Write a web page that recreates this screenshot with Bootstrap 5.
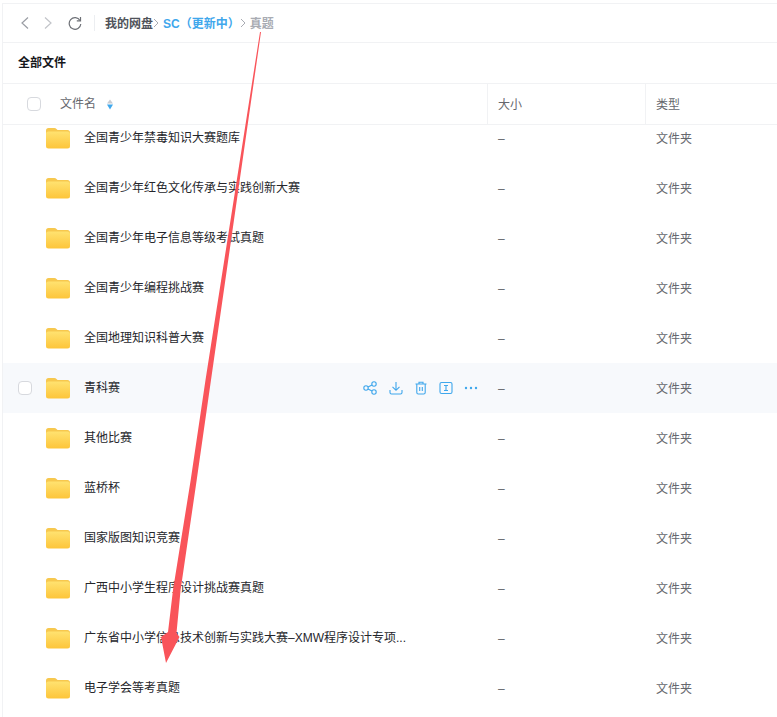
<!DOCTYPE html>
<html lang="zh">
<head>
<meta charset="utf-8">
<title>全部文件</title>
<link href="https://cdn.jsdelivr.net/npm/bootstrap@5.3.0/dist/css/bootstrap.min.css" rel="stylesheet">
<style>
html,body{height:100%;overflow:hidden;background:#fff}
body{font-family:"Liberation Sans","Noto Sans CJK SC",sans-serif;font-size:12px;color:#25262b;position:relative}
.shell{margin-left:2px;margin-top:3px;height:714px;display:flex;flex-direction:column;border-top:1px solid #f1f2f4;border-left:1px solid #f1f2f4}
.toolbar{height:39px;flex:none;border-bottom:1px solid #f1f2f4;padding-left:17px}
.tool-ic{display:block}
.tool-fwd{margin-left:13px}
.tool-reload{margin-left:15px}
.divider{width:1px;height:16px;background:#eceef1;margin:0 10px 0 12px}
.crumb{font-weight:600;color:#50535a;white-space:nowrap;padding-top:2px}
.crumb-link{color:#3fa7ec}
.crumb-now{color:#a9acb3}
.crumb-sep{color:#a9acb3;display:block}
.title-bar{height:41px;flex:none;border-bottom:1px solid #f1f2f4;padding-left:15px;font-weight:600;color:#17181c}
.head-row{height:41px;flex:none;border-bottom:1px solid #f1f2f4;color:#65676d}
.cell-name{width:484px;flex:none;display:flex;align-items:center}
.cell-size{width:158px;flex:none;padding-left:11px;padding-top:2px}
.cell-type{padding-left:11px;padding-top:2px;flex:1}
.head-row .cell-size,.head-row .cell-type{height:100%;display:flex;align-items:center;border-left:1px solid #f1f2f4;padding-left:10px}
.check{width:14px;height:14px;border:1px solid #d7d9de;border-radius:4px;background:#fff;flex:none;margin-left:24px}
.head-label{margin-left:19px}
.sort-ic{margin-left:10px;display:block}
.list-wrap{flex:1;overflow:hidden}
.file-list{margin-top:-12px}
.file-row{height:50px;display:flex;align-items:center;color:#65676d}
.file-row.active-row{background:#f7f9fc}
.name-box{padding-left:42px;display:flex;align-items:center;width:100%}
.active-row .name-box{padding-left:0}
.active-row .check{margin-left:15px;margin-right:13px}
.folder{display:block;flex:none;width:26px;height:22px}
.fname{margin-left:13px;color:#25262b;white-space:nowrap}
.actions{margin-left:auto;margin-right:9px;gap:11px}
.actions svg{display:block}
.action-share{margin-right:1px}
.arrow-layer{position:absolute;left:0;top:0;width:777px;height:717px;pointer-events:none}
</style>
</head>
<body>
<div class="shell">
  <div class="toolbar d-flex align-items-center">
    <svg class="tool-ic" width="10" height="14" viewBox="0 0 10 14" fill="none" stroke="#9a9da4" stroke-width="1.2"><path d="M8 1.500 2 7l6 5.500"/></svg>
    <svg class="tool-ic tool-fwd" width="10" height="14" viewBox="0 0 10 14" fill="none" stroke="#c2c4c9" stroke-width="1.2"><path d="M2 1.500 8 7l-6 5.500"/></svg>
    <svg class="tool-ic tool-reload" width="14" height="14" viewBox="0 0 14 14" fill="none" stroke="#6d7076" stroke-width="1.200"><path d="M12 4.500A5.800 5.800 0 1 0 12.800 8"/><path d="M12.500 1v3.800H8.800"/></svg>
    <span class="divider"></span>
    <span class="crumb">我的网盘</span>
    <svg class="crumb-sep" width="6" height="10" viewBox="0 0 6 10" fill="none" stroke="#a9acb3"><path d="M1 1l4 4-4 4"/></svg>
    <span class="crumb crumb-link ms-1">SC（更新中）</span>
    <svg class="crumb-sep" width="6" height="10" viewBox="0 0 6 10" fill="none" stroke="#a9acb3"><path d="M1 1l4 4-4 4"/></svg>
    <span class="crumb crumb-now ms-1">真题</span>
  </div>
  <div class="title-bar d-flex align-items-center">全部文件</div>
  <div class="head-row d-flex align-items-center">
    <div class="cell-name"><span class="check"></span><span class="head-label">文件名</span>
      <svg class="sort-ic" width="8" height="11" viewBox="0 0 8 11"><path d="M4 .5 7 4.500H1z" fill="#c9ccd2"/><path d="M4 10.500 7 5.500H1z" fill="#3fa7ec"/></svg>
    </div>
    <div class="cell-size">大小</div>
    <div class="cell-type">类型</div>
  </div>
  <div class="list-wrap">
    <svg width="0" height="0" class="d-block" aria-hidden="true">
      <defs>
        <linearGradient id="fg" x1="0" y1="0" x2="0" y2="1"><stop offset="0" stop-color="#ffe270"/><stop offset="1" stop-color="#fdc53a"/></linearGradient>
        <symbol id="folder-ic" viewBox="0 0 26 22">
          <path d="M1 3.500A2.500 2.500 0 0 1 3.500 1h5.800c1 0 1.600.4 2.200 1l1 1H22.500A2.500 2.500 0 0 1 25 5.500V8H1z" fill="#f7c84e"/>
          <rect x="1" y="4.500" width="24" height="17" rx="2.500" fill="url(#fg)"/>
        </symbol>
      </defs>
    </svg>
    <div class="file-list">
      <div class="file-row"><div class="cell-name"><div class="name-box"><svg class="folder"><use href="#folder-ic"/></svg><span class="fname">全国青少年禁毒知识大赛题库</span></div></div><div class="cell-size">–</div><div class="cell-type">文件夹</div></div>
      <div class="file-row"><div class="cell-name"><div class="name-box"><svg class="folder"><use href="#folder-ic"/></svg><span class="fname">全国青少年红色文化传承与实践创新大赛</span></div></div><div class="cell-size">–</div><div class="cell-type">文件夹</div></div>
      <div class="file-row"><div class="cell-name"><div class="name-box"><svg class="folder"><use href="#folder-ic"/></svg><span class="fname">全国青少年电子信息等级考试真题</span></div></div><div class="cell-size">–</div><div class="cell-type">文件夹</div></div>
      <div class="file-row"><div class="cell-name"><div class="name-box"><svg class="folder"><use href="#folder-ic"/></svg><span class="fname">全国青少年编程挑战赛</span></div></div><div class="cell-size">–</div><div class="cell-type">文件夹</div></div>
      <div class="file-row"><div class="cell-name"><div class="name-box"><svg class="folder"><use href="#folder-ic"/></svg><span class="fname">全国地理知识科普大赛</span></div></div><div class="cell-size">–</div><div class="cell-type">文件夹</div></div>
      <div class="file-row active-row"><div class="cell-name"><div class="name-box"><span class="check"></span><svg class="folder"><use href="#folder-ic"/></svg><span class="fname">青科赛</span>
        <div class="actions d-flex align-items-center">
          <svg class="action-share" width="14" height="14" viewBox="0 0 14 14" fill="none" stroke="#3fa7ec" stroke-width="1.100"><circle cx="3" cy="7" r="2.200"/><circle cx="11" cy="3" r="2.200"/><circle cx="11" cy="11" r="2.200"/><path d="M5 6l4-2M5 8l4 2"/></svg>
          <svg width="14" height="14" viewBox="0 0 14 14" fill="none" stroke="#3fa7ec" stroke-width="1.100"><path d="M7 1v8M3.500 5.800 7 9.300l3.500-3.500M1 9v2.500A1.500 1.500 0 0 0 2.500 13h9a1.500 1.500 0 0 0 1.500-1.500V9"/></svg>
          <svg width="14" height="14" viewBox="0 0 14 14" fill="none" stroke="#3fa7ec" stroke-width="1.100"><path d="M1.500 3h11M5 3V1.200h4V3M2.800 3v8.500A1.500 1.500 0 0 0 4.300 13h5.400a1.500 1.500 0 0 0 1.500-1.500V3M5.700 6v4M8.300 6v4"/></svg>
          <svg width="14" height="14" viewBox="0 0 14 14" fill="none" stroke="#3fa7ec" stroke-width="1.100"><rect x="1" y="1.500" width="12" height="11" rx="1.500"/><path d="M5 4.500h4M5 9.500h4M7 4.500v5"/></svg>
          <svg width="14" height="14" viewBox="0 0 14 14" fill="#3fa7ec"><circle cx="2" cy="7" r="1.200"/><circle cx="7" cy="7" r="1.200"/><circle cx="12" cy="7" r="1.200"/></svg>
        </div></div></div><div class="cell-size">–</div><div class="cell-type">文件夹</div></div>
      <div class="file-row"><div class="cell-name"><div class="name-box"><svg class="folder"><use href="#folder-ic"/></svg><span class="fname">其他比赛</span></div></div><div class="cell-size">–</div><div class="cell-type">文件夹</div></div>
      <div class="file-row"><div class="cell-name"><div class="name-box"><svg class="folder"><use href="#folder-ic"/></svg><span class="fname">蓝桥杯</span></div></div><div class="cell-size">–</div><div class="cell-type">文件夹</div></div>
      <div class="file-row"><div class="cell-name"><div class="name-box"><svg class="folder"><use href="#folder-ic"/></svg><span class="fname">国家版图知识竞赛</span></div></div><div class="cell-size">–</div><div class="cell-type">文件夹</div></div>
      <div class="file-row"><div class="cell-name"><div class="name-box"><svg class="folder"><use href="#folder-ic"/></svg><span class="fname">广西中小学生程序设计挑战赛真题</span></div></div><div class="cell-size">–</div><div class="cell-type">文件夹</div></div>
      <div class="file-row"><div class="cell-name"><div class="name-box"><svg class="folder"><use href="#folder-ic"/></svg><span class="fname">广东省中小学信息技术创新与实践大赛–XMW程序设计专项...</span></div></div><div class="cell-size">–</div><div class="cell-type">文件夹</div></div>
      <div class="file-row"><div class="cell-name"><div class="name-box"><svg class="folder"><use href="#folder-ic"/></svg><span class="fname">电子学会等考真题</span></div></div><div class="cell-size">–</div><div class="cell-type">文件夹</div></div>
    </div>
  </div>
</div>
<svg class="arrow-layer" viewBox="0 0 777 717" aria-hidden="true">
  <polygon points="260,32 261,32 211,380 196.700,480 180.600,590 176.500,633 179.500,637 166,663 161,637 168,632 173,590 190.700,480 205.500,380" fill="#f9545a"/>
</svg>
</body>
</html>
